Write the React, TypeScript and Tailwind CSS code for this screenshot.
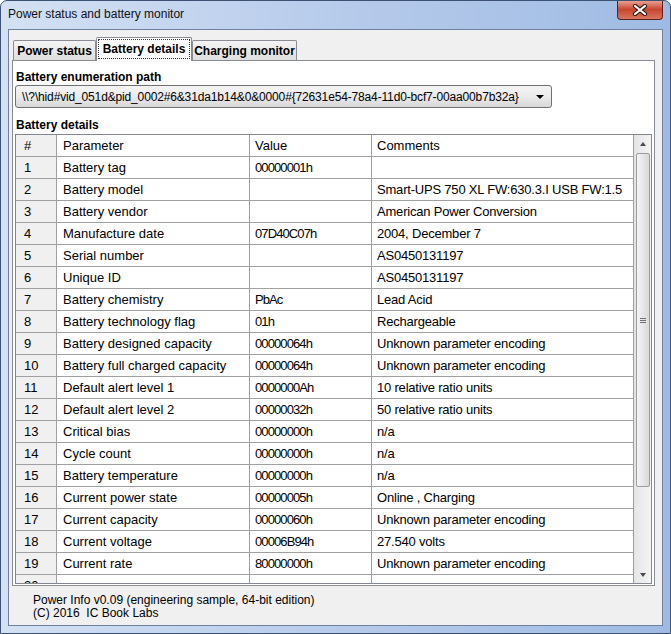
import React from 'react';

const rows: [string, string, string][] = [
  ['Battery tag', '00000001h', ''],
  ['Battery model', '', 'Smart-UPS 750 XL FW:630.3.I USB FW:1.5'],
  ['Battery vendor', '', 'American Power Conversion'],
  ['Manufacture date', '07D40C07h', '2004, December 7'],
  ['Serial number', '', 'AS0450131197'],
  ['Unique ID', '', 'AS0450131197'],
  ['Battery chemistry', 'PbAc', 'Lead Acid'],
  ['Battery technology flag', '01h', 'Rechargeable'],
  ['Battery designed capacity', '00000064h', 'Unknown parameter encoding'],
  ['Battery full charged capacity', '00000064h', 'Unknown parameter encoding'],
  ['Default alert level 1', '0000000Ah', '10 relative ratio units'],
  ['Default alert level 2', '00000032h', '50 relative ratio units'],
  ['Critical bias', '00000000h', 'n/a'],
  ['Cycle count', '00000000h', 'n/a'],
  ['Battery temperature', '00000000h', 'n/a'],
  ['Current power state', '00000005h', 'Online , Charging'],
  ['Current capacity', '00000060h', 'Unknown parameter encoding'],
  ['Current voltage', '00006B94h', '27.540 volts'],
  ['Current rate', '80000000h', 'Unknown parameter encoding'],
  ['', '', ''],
];

function CloseButton() {
  return (
    <div className="-mt-[1px] mr-[7px] w-[46px] h-[20px] rounded-b-[4px] border border-t-0 border-[#5b2219] bg-gradient-to-b from-[#e9a99b] via-[#c8462f] to-[#d8755f] flex items-center justify-center">
      <svg width="16" height="12" viewBox="0 0 16 12">
        <path d="M3 2 L13 10 M13 2 L3 10" stroke="#3b1c17" strokeWidth="4.2" strokeLinecap="round" />
        <path d="M3 2 L13 10 M13 2 L3 10" stroke="#ffffff" strokeWidth="2.2" strokeLinecap="round" />
      </svg>
    </div>
  );
}

function ScrollBar() {
  return (
    <div className="w-[17px] flex flex-col bg-gradient-to-r from-[#e6e6e6] to-[#f4f4f4] border-l border-[#e3e3e3]">
      <div className="h-[17px] flex items-center justify-center">
        <div className="w-0 h-0 border-l-[3px] border-r-[3px] border-b-[4px] border-l-transparent border-r-transparent border-b-[#4a4a4a]" />
      </div>
      <div className="flex-1 pt-[1px] pl-[1px] pr-[1px]">
        <div className="h-[334px] rounded-[2px] border border-[#9b9b9b] bg-gradient-to-r from-[#f5f5f5] to-[#d9d9d9] flex flex-col items-center justify-center gap-[1px]">
          <div className="w-[6px] h-[1px] bg-[#707070]" />
          <div className="w-[6px] h-[1px] bg-[#707070]" />
          <div className="w-[6px] h-[1px] bg-[#707070]" />
        </div>
      </div>
      <div className="h-[17px] flex items-center justify-center">
        <div className="w-0 h-0 border-l-[3px] border-r-[3px] border-t-[4px] border-l-transparent border-r-transparent border-t-[#4a4a4a]" />
      </div>
    </div>
  );
}

export default function App() {
  return (
    <div className="w-[671px] h-[634px] flex flex-col overflow-hidden rounded-t-[7px] border border-[#3d5272] bg-gradient-to-r from-[#d3e1f3] via-[#b7cbeb] to-[#9fbbe3] text-[13px] text-black font-['Liberation_Sans',Arial,sans-serif]">
      {/* title bar */}
      <div className="h-[28px] shrink-0 flex items-start justify-between">
        <span className="pl-[7px] pt-[6px] text-[12px] leading-[15px] text-[#111]">Power status and battery monitor</span>
        <CloseButton />
      </div>

      {/* client area */}
      <div className="flex-1 mx-[7px] mb-[7px] flex flex-col bg-[#f0f0f0] border border-[#6f819e]">
        {/* tabs */}
        <div className="mt-[7px] h-[23px] pl-[4px] flex items-end text-[12px] font-bold">
          <div className="w-[83px] h-[20px] flex items-center justify-center rounded-t-[2px] border border-b-0 border-[#898c95] bg-gradient-to-b from-[#f4f4f4] to-[#dedede]">
            Power status
          </div>
          <div className="relative z-10 w-[96px] h-[24px] -mb-[1px] p-[1px] rounded-t-[2px] border border-b-0 border-[#898c95] bg-white">
            <div className="h-[20px] flex items-center justify-center border border-dotted border-[#333]">Battery details</div>
          </div>
          <div className="w-[105px] h-[20px] flex items-center justify-center rounded-t-[2px] border border-b-0 border-[#898c95] bg-gradient-to-b from-[#f4f4f4] to-[#dedede]">
            Charging monitor
          </div>
        </div>

        {/* tab page */}
        <div className="ml-[3px] w-[643px] h-[526px] flex flex-col bg-white border border-[#898c95]">
          <div className="mt-[9px] pl-[3px] leading-[15px] text-[12px] font-bold">Battery enumeration path</div>
          <div className="ml-[2px] w-[537px] h-[23px] flex items-center rounded-[3px] border border-[#707070] bg-gradient-to-b from-[#f4f4f4] via-[#ebebeb] to-[#d8d8d8]">
            <span className="flex-1 pl-[6px] text-[12px] tracking-[-0.15px] whitespace-nowrap overflow-hidden">
              {'\\\\?\\hid#vid_051d&pid_0002#6&31da1b14&0&0000#{72631e54-78a4-11d0-bcf7-00aa00b7b32a}'}
            </span>
            <div className="mr-[7px] ml-[4px] w-0 h-0 border-l-[4px] border-r-[4px] border-t-[4px] border-l-transparent border-r-transparent border-t-black" />
          </div>
          <div className="mt-[10px] pl-[3px] leading-[15px] text-[12px] font-bold">Battery details</div>

          {/* grid */}
          <div className="mt-[1px] ml-[2px] w-[637px] h-[450px] flex border border-[#828790]">
            <div className="flex-1 overflow-hidden">
              <div className="grid grid-cols-[41px_193px_122px_262px]">
                <div className="h-[22px] pl-[8px] flex items-center bg-[#f0f0f0] border-b border-r border-[#a0a0a0]">#</div>
                <div className="h-[22px] pl-[6px] flex items-center border-b border-r border-[#a0a0a0]">Parameter</div>
                <div className="h-[22px] pl-[5px] flex items-center border-b border-r border-[#a0a0a0]">Value</div>
                <div className="h-[22px] pl-[5px] flex items-center border-b border-r border-[#a0a0a0]">Comments</div>
                {rows.map((r, i) => (
                  <React.Fragment key={i}>
                    <div className="h-[22px] pl-[8px] flex items-center bg-[#f0f0f0] border-b border-r border-[#a0a0a0]">{i + 1}</div>
                    <div className="h-[22px] pl-[6px] flex items-center whitespace-nowrap border-b border-r border-[#a0a0a0]">{r[0]}</div>
                    <div className="h-[22px] pl-[5px] flex items-center whitespace-nowrap tracking-[-0.9px] border-b border-r border-[#a0a0a0]">{r[1]}</div>
                    <div className="h-[22px] pl-[5px] flex items-center whitespace-nowrap tracking-[-0.2px] border-b border-r border-[#a0a0a0]">{r[2]}</div>
                  </React.Fragment>
                ))}
              </div>
            </div>
            <ScrollBar />
          </div>
        </div>

        {/* footer */}
        <div className="pt-[8px] pl-[24px] text-[12px] leading-[13px]">
          <div>Power Info v0.09 (engineering sample, 64-bit edition)</div>
          <div>(C) 2016&nbsp; IC Book Labs</div>
        </div>
      </div>
    </div>
  );
}
